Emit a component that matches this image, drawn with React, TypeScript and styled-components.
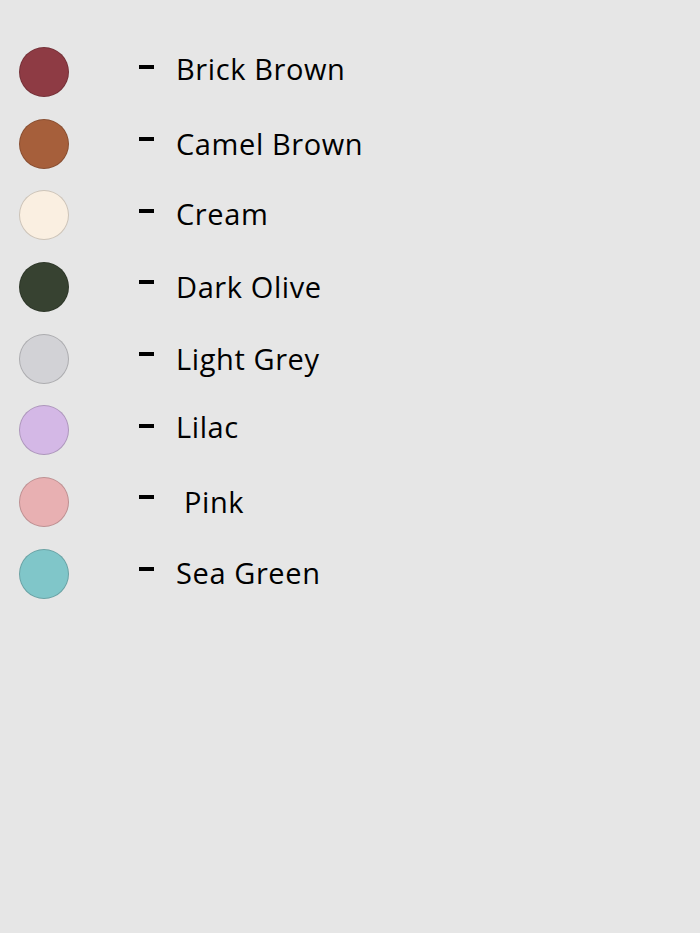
import styled, { createGlobalStyle } from "styled-components";

const GlobalStyle = createGlobalStyle`
  html, body {
    margin: 0;
    padding: 0;
    background: #e6e6e6;
  }
  body {
    font-family: "Open Sans", "Liberation Sans", sans-serif;
  }
`;

const Page = styled.div`
  width: 700px;
  height: 933px;
  background: #e6e6e6;
  padding-top: 36px;
  box-sizing: border-box;
`;

const SwatchRow = styled.div`
  display: grid;
  grid-template-columns: 19px 50px 70px 15px 22px auto;
  align-items: center;
  height: 71.7px;
`;

const Swatch = styled.div<{ $color: string }>`
  grid-column: 2;
  width: 50px;
  height: 50px;
  border-radius: 50%;
  box-sizing: border-box;
  background: ${(p) => p.$color};
  border: 1px solid rgba(0, 0, 0, 0.18);
`;

const Dash = styled.span`
  grid-column: 4;
  width: 15px;
  height: 4px;
  background: #000;
  margin-bottom: 9px;
`;

const Label = styled.span<{ $indent?: number; $drop?: number }>`
  grid-column: 6;
  font-size: 29px;
  font-weight: 500;
  letter-spacing: 0.6px;
  color: #000;
  line-height: 1;
  padding-left: ${(p) => p.$indent ?? 0}px;
  margin-top: ${(p) => -6 + 2 * (p.$drop ?? 0)}px;
  white-space: pre;
`;

const colours = [
  { name: "Brick Brown", color: "#8e3b44", drop: 0 },
  { name: "Camel Brown", color: "#a65f3b", drop: 3 },
  { name: "Cream", color: "#faefe1", drop: 1 },
  { name: "Dark Olive", color: "#374231", drop: 3 },
  { name: "Light Grey", color: "#d2d2d6", drop: 3 },
  { name: "Lilac", color: "#d4b8e6", drop: -1 },
  { name: "Pink", color: "#e8b0b2", indent: 8, drop: 3 },
  { name: "Sea Green", color: "#80c6c9", drop: 2 },
];

function App() {
  return (
    <Page>
      <GlobalStyle />
      {colours.map((c) => (
        <SwatchRow key={c.name}>
          <Swatch $color={c.color} />
          <Dash />
          <Label $indent={c.indent} $drop={c.drop}>
            {c.name}
          </Label>
        </SwatchRow>
      ))}
    </Page>
  );
}

export default App;
